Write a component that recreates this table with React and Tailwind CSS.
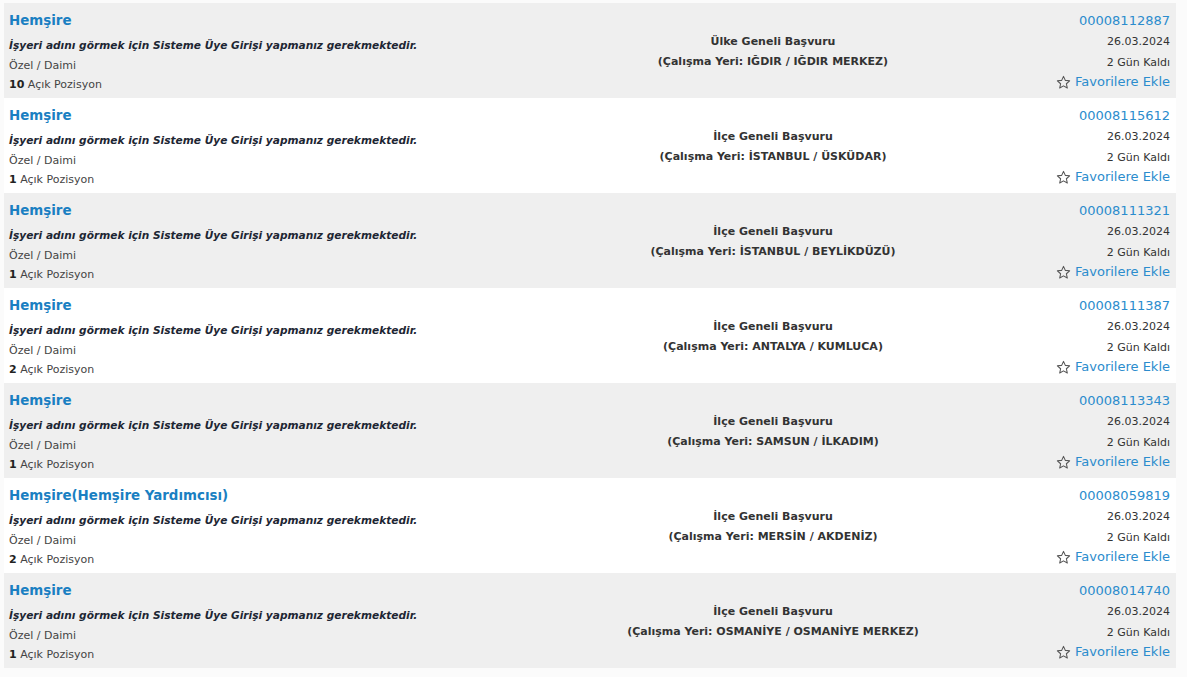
// App.jsx — job listing rows (Hemşire ilanları)

import React from 'react';

const jobs = [
  { title: 'Hemşire', type: 'Ülke Geneli Başvuru', place: 'IĞDIR / IĞDIR MERKEZ', id: '00008112887', count: 10 },
  { title: 'Hemşire', type: 'İlçe Geneli Başvuru', place: 'İSTANBUL / ÜSKÜDAR', id: '00008115612', count: 1 },
  { title: 'Hemşire', type: 'İlçe Geneli Başvuru', place: 'İSTANBUL / BEYLİKDÜZÜ', id: '00008111321', count: 1 },
  { title: 'Hemşire', type: 'İlçe Geneli Başvuru', place: 'ANTALYA / KUMLUCA', id: '00008111387', count: 2 },
  { title: 'Hemşire', type: 'İlçe Geneli Başvuru', place: 'SAMSUN / İLKADIM', id: '00008113343', count: 1 },
  { title: 'Hemşire(Hemşire Yardımcısı)', type: 'İlçe Geneli Başvuru', place: 'MERSİN / AKDENİZ', id: '00008059819', count: 2 },
  { title: 'Hemşire', type: 'İlçe Geneli Başvuru', place: 'OSMANİYE / OSMANİYE MERKEZ', id: '00008014740', count: 1 },
];

// outlined star, like the old "star-o" glyph
function StarIcon() {
  return (
    <svg width="15" height="15" viewBox="0 0 24 24" className="shrink-0">
      <polygon
        points="12,2.2 14.9,8.6 21.8,9.3 16.6,14 18.1,20.9 12,17.4 5.9,20.9 7.4,14 2.2,9.3 9.1,8.6"
        fill="none"
        stroke="#555"
        strokeWidth="1.7"
        strokeLinejoin="round"
      />
    </svg>
  );
}

function JobRow({ job, odd }) {
  return (
    <div className={`grid grid-cols-[562px_1fr_196px] h-[95px] ${odd ? 'bg-[#efefef]' : 'bg-white'}`}>
      {/* Left: title + info */}
      <div className="pl-[5px] pt-[4px]">
        <div className="h-[28px] leading-[28px] text-[13.4px] font-bold text-[#1a7fc2]">{job.title}</div>
        <div className="h-[20px] leading-[20px] text-[10.6px] font-bold italic text-[#1d2633] whitespace-nowrap">
          İşyeri adını görmek için Sisteme Üye Girişi yapmanız gerekmektedir.
        </div>
        <div className="h-[20px] leading-[20px] text-[11px] text-[#444] pt-[1px]">Özel / Daimi</div>
        <div className="h-[20px] leading-[20px] text-[11px] text-[#444]">
          <span className="font-bold text-[#222]">{job.count}</span> Açık Pozisyon
        </div>
      </div>

      {/* Middle: application scope */}
      <div className="flex flex-col items-center justify-center text-[11px] font-bold text-[#333] pt-[2px]">
        <div className="leading-[20px]">{job.type}</div>
        <div className="leading-[20px]">(Çalışma Yeri: {job.place})</div>
      </div>

      {/* Right: id, date, favourite */}
      <div className="flex flex-col items-end pr-[6px] pt-[7px]">
        <div className="h-[22px] leading-[22px] text-[13px] text-[#2b8ccd]">{job.id}</div>
        <div className="h-[20px] leading-[20px] text-[11px] text-[#333]">26.03.2024</div>
        <div className="h-[20px] leading-[20px] text-[11px] text-[#333] pt-[1px]">2 Gün Kaldı</div>
        <div className="h-[20px] flex items-center gap-[4px] text-[13px] text-[#2b8ccd]">
          <StarIcon />
          <span className="leading-[20px]">Favorilere Ekle</span>
        </div>
      </div>
    </div>
  );
}

export default function App() {
  return (
    <div className="w-[1187px] h-[677px] bg-[#fbfbfb] overflow-hidden font-['DejaVu_Sans',Verdana,sans-serif]">
      <div className="pl-[4px] pr-[11px] pt-[3px]">
        {jobs.map((job, i) => (
          <JobRow key={job.id} job={job} odd={i % 2 === 0} />
        ))}
      </div>
    </div>
  );
}
